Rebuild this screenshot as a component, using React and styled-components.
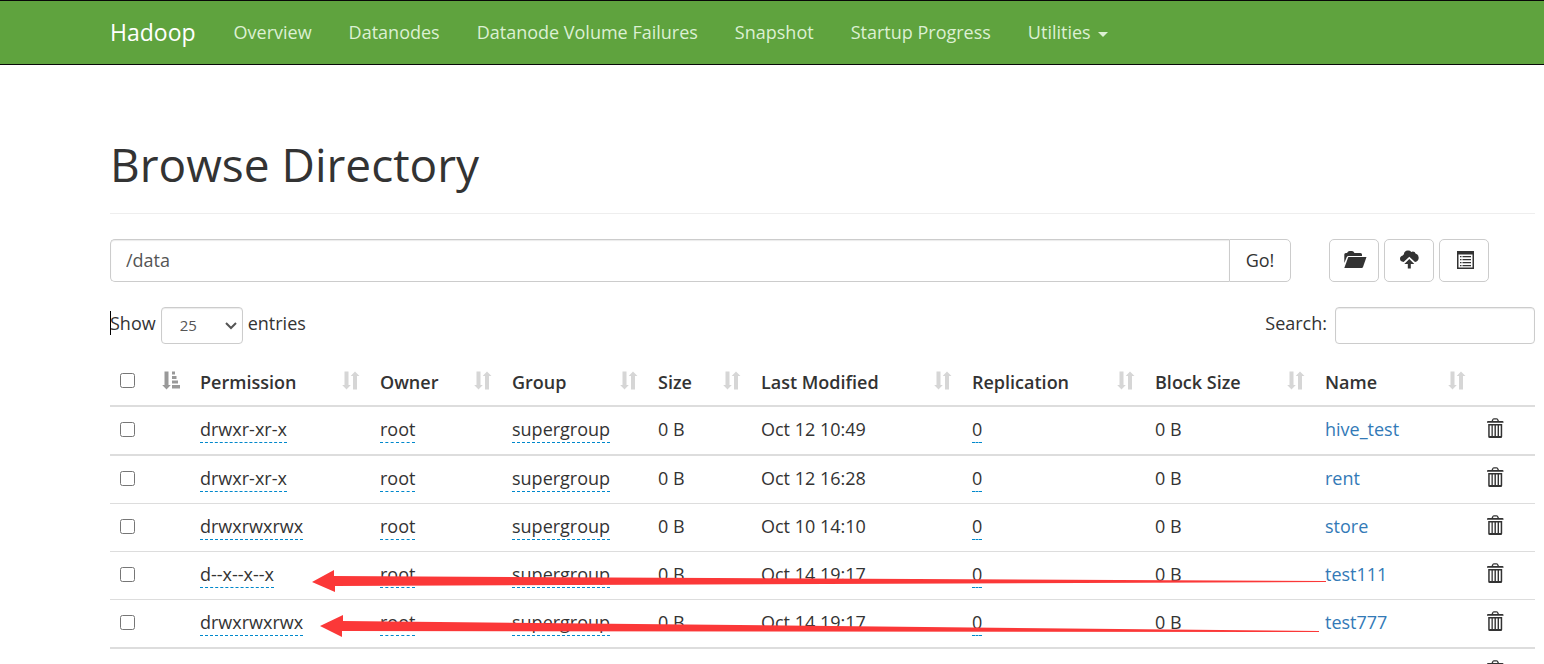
import React from "react";
import styled, { createGlobalStyle } from "styled-components";

const GlobalStyle = createGlobalStyle`
  *, *::before, *::after { box-sizing: border-box; }
  body {
    margin: 0;
    background: #fff;
    color: #333;
    font-family: "Open Sans", "Noto Sans", sans-serif;
    font-size: 18px;
    line-height: 26px;
  }
  button, input, select { font: inherit; color: inherit; margin: 0; }
`;

const Page = styled.div`
  height: 100vh;
  overflow: hidden;
`;

const Navbar = styled.nav`
  display: flex;
  align-items: center;
  height: 65px;
  padding: 0 9px 2px 110px;
  background: #5fa33e;
  border: solid #080808;
  border-width: 1px 0;
  white-space: nowrap;
`;

const Brand = styled.a`
  margin-right: 38px;
  color: #fff;
  font-size: 23px;
  text-decoration: none;
`;

const NavList = styled.ul`
  display: flex;
  gap: 37px;
  margin: 0;
  padding: 0;
  list-style: none;
`;

const NavLink = styled.a`
  display: flex;
  align-items: center;
  gap: 7px;
  color: #dcf0d3;
  text-decoration: none;
`;

const Caret = styled.span`
  margin-top: 5px;
  border: 5px solid transparent;
  border-top-color: currentColor;
  border-bottom: 0;
`;

const Main = styled.main`
  padding: 71px 9px 0 110px;
`;

const Title = styled.h1`
  margin: 0 0 25px;
  padding-bottom: 21px;
  border-bottom: 1px solid #eee;
  font-size: 46px;
  font-weight: 400;
  line-height: 56px;
`;

const PathBar = styled.form`
  display: flex;
  gap: 38px;
  height: 43px;
  margin-right: 46px;
`;

const PathGroup = styled.div`
  display: flex;
  flex: 1;
`;

const PathInput = styled.input`
  flex: 1;
  min-width: 0;
  padding: 0 15px 2px;
  color: #555;
  border: 1px solid #ccc;
  border-right: 0;
  border-radius: 5px 0 0 5px;
  box-shadow: inset 0 1px 1px rgba(0, 0, 0, 0.08);
`;

const Button = styled.button`
  display: flex;
  align-items: center;
  justify-content: center;
  width: ${(p) => (p.$joined ? 62 : 50)}px;
  padding: 0 0 2px;
  background: #fff;
  border: 1px solid #ccc;
  border-radius: ${(p) => (p.$joined ? "0 5px 5px 0" : "5px")};
`;

const Actions = styled.div`
  display: flex;
  gap: 5px;
`;

const Controls = styled.div`
  display: flex;
  justify-content: space-between;
  margin-top: 25px;
`;

const ControlLabel = styled.label`
  position: relative;
  display: flex;
  gap: ${(p) => p.$gap}px;
`;

const ControlText = styled.span`
  padding-top: 3px;
`;

const TextCursor = styled.span`
  position: absolute;
  top: 4px;
  left: 0;
  width: 1px;
  height: 24px;
  background: #000;
`;

const SelectBox = styled.span`
  position: relative;
  display: block;
`;

const LengthSelect = styled.select`
  appearance: none;
  width: 82px;
  height: 37px;
  padding: 0 18px 2px;
  background: #fff;
  border: 1px solid #ccc;
  border-radius: 4px;
  box-shadow: inset 0 1px 1px rgba(0, 0, 0, 0.08);
  color: #555;
  font-size: 15px;
`;

const Chevron = styled.svg`
  position: absolute;
  top: 15px;
  right: 6px;
  pointer-events: none;
`;

const SearchInput = styled.input`
  width: 200px;
  height: 37px;
  padding: 0 12px;
  border: 1px solid #ccc;
  border-radius: 4px;
  box-shadow: inset 0 1px 1px rgba(0, 0, 0, 0.08);
`;

const TableArea = styled.div`
  position: relative;
  margin-top: 15px;
`;

const Table = styled.table`
  width: 100%;
  table-layout: fixed;
  border-collapse: separate;
  border-spacing: 0;
  white-space: nowrap;
`;

const HeadCell = styled.th`
  height: 48px;
  padding: 0 10px;
  border-bottom: 2px solid #ddd;
  text-align: left;
  font-weight: 600;
`;

const HeadInner = styled.div`
  display: flex;
  align-items: center;
  justify-content: space-between;

  > svg, > input { margin-bottom: 4px; }
`;

const Cell = styled.td`
  height: ${(p) => (p.$heavy ? 49 : 48)}px;
  padding: 9px 10px 0;
  border-bottom: ${(p) => (p.$heavy ? 2 : 1)}px solid #ddd;
  vertical-align: top;
`;

const Checkbox = styled.input`
  display: block;
  width: 15px;
  height: 15px;

  td > & { margin-top: 6px; }
`;

const Editable = styled.span`
  display: inline-block;
  border-bottom: 1px dashed #0088cc;
`;

const NameLink = styled.a`
  color: #337ab7;
  text-decoration: none;
`;

const IconButton = styled.button`
  display: block;
  margin-top: 2px;
  padding: 0;
  background: none;
  border: 0;
  line-height: 0;
`;

const Annotation = styled.svg`
  position: absolute;
  top: 0;
  left: 0;
  pointer-events: none;
`;

const SortIcon = () => (
  <svg width="18" height="19" viewBox="0 0 18 19" fill="#d6d6d6" aria-hidden="true">
    <path d="M2.500 0.500h4v13.500h2.300L4.500 18.500 0.200 14h2.300z" />
    <path d="M11 18.500h4V5h2.500L13 0.500 8.700 5H11z" />
  </svg>
);

const SortAscIcon = () => (
  <svg width="18" height="19" viewBox="0 0 18 19" fill="#999" aria-hidden="true">
    <path d="M2.500 0.500h4v13.500h2.300L4.500 18.500 0.200 14h2.300z" />
    <path d="M10 0.500h3v3h-3zM10 5h4.500v3H10zM10 9.500h6v3h-6zM10 14h8v3.500h-8z" />
  </svg>
);

const FolderIcon = () => (
  <svg width="26" height="18" viewBox="-3 0 26 18" fill="#333" aria-hidden="true">
    <path d="M0.300 12V3.500Q0.300 2 1.800 2H3Q4 0 5.500 0H8Q9.500 0 10.500 2H16.500Q18 2 18 3.500V5H4.500Q3.300 5 2.800 6Z" />
    <path d="M4.300 6H22.500L19 16Q18.600 17 17.800 17H.3Z" />
  </svg>
);

const CloudUploadIcon = () => (
  <svg width="19" height="19" viewBox="0 0 19 19" fill="#333" aria-hidden="true">
    <path d="M3.600 12 9.300 6.800 15 12Q18.700 11 18.700 7.700 18.700 4.500 15.500 3.600 15.200 1.500 12.800 1.500 12 1.500 11.300 1.900 10 .3 7.800.5 4 .8 3.900 4.500 3 4.600 2.800 5.500 0 6.200 0 8.800 0 11.500 3.600 12z" />
    <path d="M9.300 9l5 5h-3.500v4.500H7.800V14H4.300z" />
  </svg>
);

const ListIcon = () => (
  <svg width="19" height="18" viewBox="-2 0 19 18" fill="#333" aria-hidden="true">
    <path fillRule="evenodd" d="M0 0h17v18H0zM1.500 3.500v13h14v-13z" />
    <path d="M3 5h1.500v1.200H3zM5.500 5h8.500v1.200H5.500zM3 8h1.500v1.200H3zM5.500 8h8.500v1.200H5.500zM3 11h1.500v1.200H3zM5.500 11h8.500v1.200H5.500zM3 14h1.500v1.200H3zM5.500 14h8.500v1.200H5.500z" />
  </svg>
);

const TrashIcon = () => (
  <svg width="18" height="20" viewBox="-1 0 18 20" fill="#333" aria-hidden="true">
    <path fillRule="evenodd" d="M0 4.800V4Q0 3 1 3H4.500L5.500 1Q6 .3 7 .3H9.500Q10.500 .3 11 1L12 3H15.500Q16.500 3 16.500 4V4.800zM6 3H10.500L10 1.600H6.500z" />
    <path fillRule="evenodd" d="M1.200 6H15.200V18.500Q15.200 20 13.700 20H2.700Q1.200 20 1.200 18.500zM2.700 7.500V18H4.500V7.500zM5.800 7.500V18H7.500V7.500zM8.900 7.500V18H10.600V7.500zM12 7.500V18H13.700V7.500z" />
  </svg>
);

const navItems = [
  "Overview",
  "Datanodes",
  "Datanode Volume Failures",
  "Snapshot",
  "Startup Progress",
];

const columns = [
  { label: "Permission", width: 180 },
  { label: "Owner", width: 132 },
  { label: "Group", width: 146 },
  { label: "Size", width: 103 },
  { label: "Last Modified", width: 211 },
  { label: "Replication", width: 183 },
  { label: "Block Size", width: 170 },
  { label: "Name", width: 161 },
];

const files = [
  { permission: "drwxr-xr-x", modified: "Oct 12 10:49", name: "hive_test", heavy: true },
  { permission: "drwxr-xr-x", modified: "Oct 12 16:28", name: "rent" },
  { permission: "drwxrwxrwx", modified: "Oct 10 14:10", name: "store" },
  { permission: "d--x--x--x", modified: "Oct 14 19:17", name: "test111" },
  { permission: "drwxrwxrwx", modified: "Oct 14 19:17", name: "test777", heavy: true },
];

function FileRow({ file }) {
  const heavy = file.heavy;
  return (
    <tr>
      <Cell $heavy={heavy}>
        <Checkbox type="checkbox" aria-label={`Select ${file.name}`} />
      </Cell>
      <Cell $heavy={heavy}><Editable>{file.permission}</Editable></Cell>
      <Cell $heavy={heavy}><Editable>root</Editable></Cell>
      <Cell $heavy={heavy}><Editable>supergroup</Editable></Cell>
      <Cell $heavy={heavy}>0 B</Cell>
      <Cell $heavy={heavy}>{file.modified}</Cell>
      <Cell $heavy={heavy}><Editable>0</Editable></Cell>
      <Cell $heavy={heavy}>0 B</Cell>
      <Cell $heavy={heavy}><NameLink href="#">{file.name}</NameLink></Cell>
      <Cell $heavy={heavy}>
        <IconButton type="button" aria-label={`Delete ${file.name}`}><TrashIcon /></IconButton>
      </Cell>
    </tr>
  );
}

export default function App() {
  return (
    <Page>
      <GlobalStyle />
      <Navbar>
        <Brand href="#">Hadoop</Brand>
        <NavList>
          {navItems.map((item) => (
            <li key={item}><NavLink href="#">{item}</NavLink></li>
          ))}
          <li><NavLink href="#">Utilities<Caret /></NavLink></li>
        </NavList>
      </Navbar>
      <Main>
        <Title>Browse Directory</Title>
        <PathBar onSubmit={(e) => e.preventDefault()}>
          <PathGroup>
            <PathInput type="text" aria-label="Directory" defaultValue="/data" />
            <Button $joined type="submit">Go!</Button>
          </PathGroup>
          <Actions>
            <Button type="button" aria-label="Create directory"><FolderIcon /></Button>
            <Button type="button" aria-label="Upload files"><CloudUploadIcon /></Button>
            <Button type="button" aria-label="Cut and paste"><ListIcon /></Button>
          </Actions>
        </PathBar>
        <Controls>
          <ControlLabel $gap={5}>
            <TextCursor />
            <ControlText>Show</ControlText>
            <SelectBox>
              <LengthSelect defaultValue="25">
                <option>25</option>
                <option>50</option>
                <option>100</option>
              </LengthSelect>
              <Chevron width="12" height="8" viewBox="0 0 12 8" fill="none" stroke="#555" strokeWidth="2" aria-hidden="true">
                <path d="M1 1l5 5 5-5" />
              </Chevron>
            </SelectBox>
            <ControlText>entries</ControlText>
          </ControlLabel>
          <ControlLabel $gap={8}>
            <ControlText>Search:</ControlText>
            <SearchInput type="search" />
          </ControlLabel>
        </Controls>
        <TableArea>
          <Table>
            <colgroup>
              <col style={{ width: 80 }} />
              {columns.map((c) => (
                <col key={c.label} style={{ width: c.width }} />
              ))}
              <col style={{ width: 59 }} />
            </colgroup>
            <thead>
              <tr>
                <HeadCell>
                  <HeadInner>
                    <Checkbox type="checkbox" aria-label="Select all" />
                    <SortAscIcon />
                  </HeadInner>
                </HeadCell>
                {columns.map((c) => (
                  <HeadCell key={c.label}>
                    <HeadInner>{c.label}<SortIcon /></HeadInner>
                  </HeadCell>
                ))}
                <HeadCell />
              </tr>
            </thead>
            <tbody>
              {files.map((file) => (
                <FileRow key={file.name} file={file} />
              ))}
              <tr>
                <Cell colSpan={9} />
                <Cell>
                  <IconButton type="button" aria-label="Delete"><TrashIcon /></IconButton>
                </Cell>
              </tr>
            </tbody>
          </Table>
          <Annotation width="1220" height="290" viewBox="0 0 1220 290" fill="#fb3838" aria-hidden="true">
            <path d="M202 223L224 211V217L1216 222V223L225 227V233Z" />
            <path d="M210 267L233 256V262L1209 272V273L232 272V278Z" />
          </Annotation>
        </TableArea>
      </Main>
    </Page>
  );
}
